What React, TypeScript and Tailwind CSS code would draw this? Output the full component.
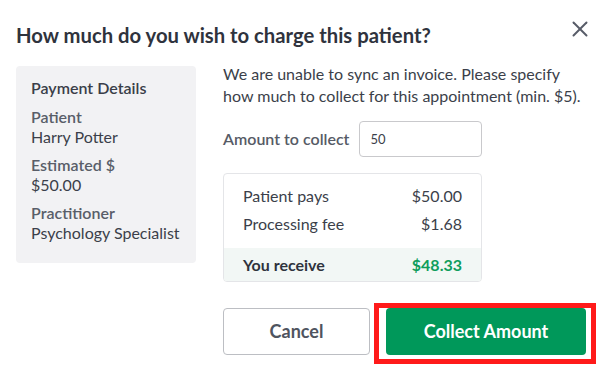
import { X } from "lucide-react";

const font = { fontFamily: "Lato, 'Noto Sans', sans-serif" };

export default function App() {
  const details = [
    { label: "Patient", value: "Harry Potter" },
    { label: "Estimated $", value: "$50.00" },
    { label: "Practitioner", value: "Psychology Specialist" },
  ];

  return (
    <div className="w-[607px] h-[374px] bg-white px-4 pt-[21px] text-[#3b3f4a]" style={font}>
      <div className="flex items-start justify-between">
        <h2 className="text-[20.25px] leading-[28px] font-bold text-[#2f333d]">
          How much do you wish to charge this patient?
        </h2>
        <button type="button" className="mr-[-2px] mt-[-5px] text-[#575c68]">
          <X className="w-[26px] h-[26px]" strokeWidth={1.8} />
        </button>
      </div>

      <div className="flex gap-[27px] mt-[17px]">
        {/* Payment details */}
        <div className="w-[180px] h-[197px] shrink-0 rounded bg-[#f2f2f4] px-[15px] pt-[11px]">
          <h3 className="text-[16px] leading-[22px] font-semibold text-[#3a3e49]">Payment Details</h3>
          {details.map((d) => (
            <div key={d.label} className="mt-[8px]">
              <div className="text-[16px] leading-[20px] font-semibold text-[#595e69]">{d.label}</div>
              <div className="text-[16px] leading-[20px] text-[#3b3f4a]">{d.value}</div>
            </div>
          ))}
        </div>

        <div className="flex-1">
          <p className="text-[16px] leading-[22px] text-[#3b3f4a] -mt-[3px]">
            We are unable to sync an invoice. Please specify how much to collect for this appointment (min. $5).
          </p>

          <div className="flex items-center gap-[10px] mt-[14px]">
            <label className="text-[16px] font-semibold text-[#565b66]">Amount to collect</label>
            <input
              defaultValue="50"
              className="w-[123px] h-[36px] rounded border border-[#c9c9cc] px-[10px] text-[13px] text-[#3b3f4a] outline-none"
              style={font}
            />
          </div>

          <div className="w-[259px] mt-[16px] rounded border border-[#e4e5e8] overflow-hidden">
            <div className="px-[19px] pt-[8px] pb-[10px] text-[16px] text-[#3b3f4a]">
              <div className="flex justify-between leading-[28px]">
                <span>Patient pays</span>
                <span>$50.00</span>
              </div>
              <div className="flex justify-between leading-[28px]">
                <span>Processing fee</span>
                <span>$1.68</span>
              </div>
            </div>
            <div className="flex justify-between px-[19px] h-[33px] items-center bg-[#f2f7f5] text-[16px] font-bold">
              <span className="text-[#2f333d]">You receive</span>
              <span className="text-[#0f9d5c]">$48.33</span>
            </div>
          </div>

          <div className="flex gap-[16px] mt-[26px]">
            <button
              type="button"
              className="w-[147px] h-[47px] rounded border border-[#bcbec3] bg-white text-[18px] font-bold text-[#4f5460]"
            >
              Cancel
            </button>
            <div className="relative">
              <button
                type="button"
                className="w-[200px] h-[47px] rounded bg-[#00985a] text-[18px] font-bold text-white"
              >
                Collect Amount
              </button>
              <div className="absolute left-[-12px] right-[-10px] top-[-5px] bottom-[-9px] border-[5px] border-[#ff1a1a] pointer-events-none" />
            </div>
          </div>
        </div>
      </div>
    </div>
  );
}
